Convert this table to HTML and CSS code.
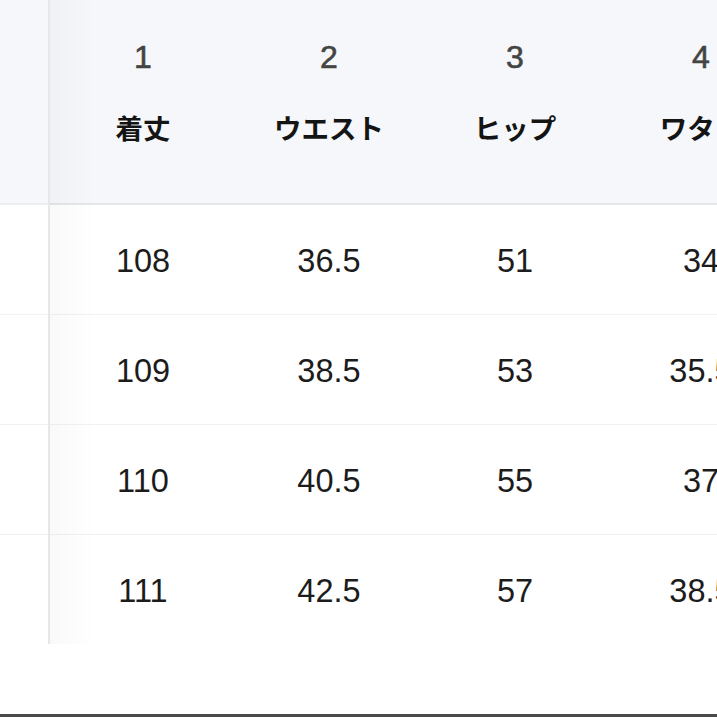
FILE: index.html
```html
<!DOCTYPE html>
<html lang="ja">
<head>
<meta charset="utf-8">
<link rel="stylesheet" href="styles.css">
</head>
<body>
<div class="screen">
  <div class="table-wrap">
    <div class="fixed-col">
      <div class="fixed-head"></div>
      <div class="fixed-row"></div>
      <div class="fixed-row"></div>
      <div class="fixed-row"></div>
      <div class="fixed-row last"></div>
    </div>
    <div class="scroll">
      <div class="shade"></div>
      <div class="grid">
        <div class="head"><span class="num">1</span><span class="label">着丈</span></div>
        <div class="head"><span class="num">2</span><span class="label">ウエスト</span></div>
        <div class="head"><span class="num">3</span><span class="label">ヒップ</span></div>
        <div class="head"><span class="num">4</span><span class="label">ワタリ</span></div>

        <div class="cell">108</div><div class="cell">36.5</div><div class="cell">51</div><div class="cell">34</div>
        <div class="cell">109</div><div class="cell">38.5</div><div class="cell">53</div><div class="cell">35.5</div>
        <div class="cell">110</div><div class="cell">40.5</div><div class="cell">55</div><div class="cell">37</div>
        <div class="cell last">111</div><div class="cell last">42.5</div><div class="cell last">57</div><div class="cell last">38.5</div>
      </div>
    </div>
  </div>
  <div class="bottom-line"></div>
</div>
</body>
</html>
```

FILE: styles.css
```css
* { box-sizing: border-box; }
html, body { margin: 0; padding: 0; background: #ffffff; }
body {
  font-family: "Liberation Sans", "Noto Sans CJK JP", sans-serif;
  color: #1c1c1c;
}
.screen {
  width: 717px;
  height: 717px;
  overflow: hidden;
  display: flex;
  flex-direction: column;
}
.table-wrap {
  display: flex;
  height: 644px;
}
.fixed-col {
  width: 50px;
  flex: none;
  border-right: 2px solid #e6e7ea;
  display: flex;
  flex-direction: column;
}
.fixed-head {
  height: 205px;
  background: #f5f7fa;
  border-bottom: 2px solid #eceef1;
}
.fixed-row {
  height: 110px;
  border-bottom: 1px solid #f1f2f4;
}
.fixed-row.last { border-bottom: none; height: 109px; }
.scroll {
  position: relative;
  flex: 1;
  overflow: hidden;
}
.shade {
  position: absolute;
  left: 0;
  top: 0;
  bottom: 0;
  width: 46px;
  background: linear-gradient(to right, rgba(0,0,0,0.025), rgba(0,0,0,0));
  z-index: 2;
}
.grid {
  display: grid;
  grid-template-columns: repeat(4, 186px);
  grid-template-rows: 205px repeat(3, 110px) 109px;
  width: 744px;
}
.head {
  background: #f5f7fa;
  border-bottom: 2px solid #e4e6ea;
  display: flex;
  flex-direction: column;
  align-items: center;
  padding-top: 39px;
  gap: 34px;
}
.num {
  font-size: 32px;
  line-height: 36px;
  color: #444444;
  font-weight: 400;
  -webkit-text-stroke: 0.6px #444444;
}
.label {
  font-family: "Noto Sans CJK JP", sans-serif;
  font-size: 27.5px;
  line-height: 36px;
  font-weight: 700;
  color: #141414;
}
.cell {
  display: flex;
  align-items: center;
  justify-content: center;
  font-size: 32.5px;
  color: #1c1c1c;
  border-bottom: 1px solid #f1f2f4;
  padding-top: 4px;
}
.cell.last { border-bottom: none; }
.bottom-line {
  margin-top: auto;
  height: 3px;
  background: #4a4a4a;
}
```
